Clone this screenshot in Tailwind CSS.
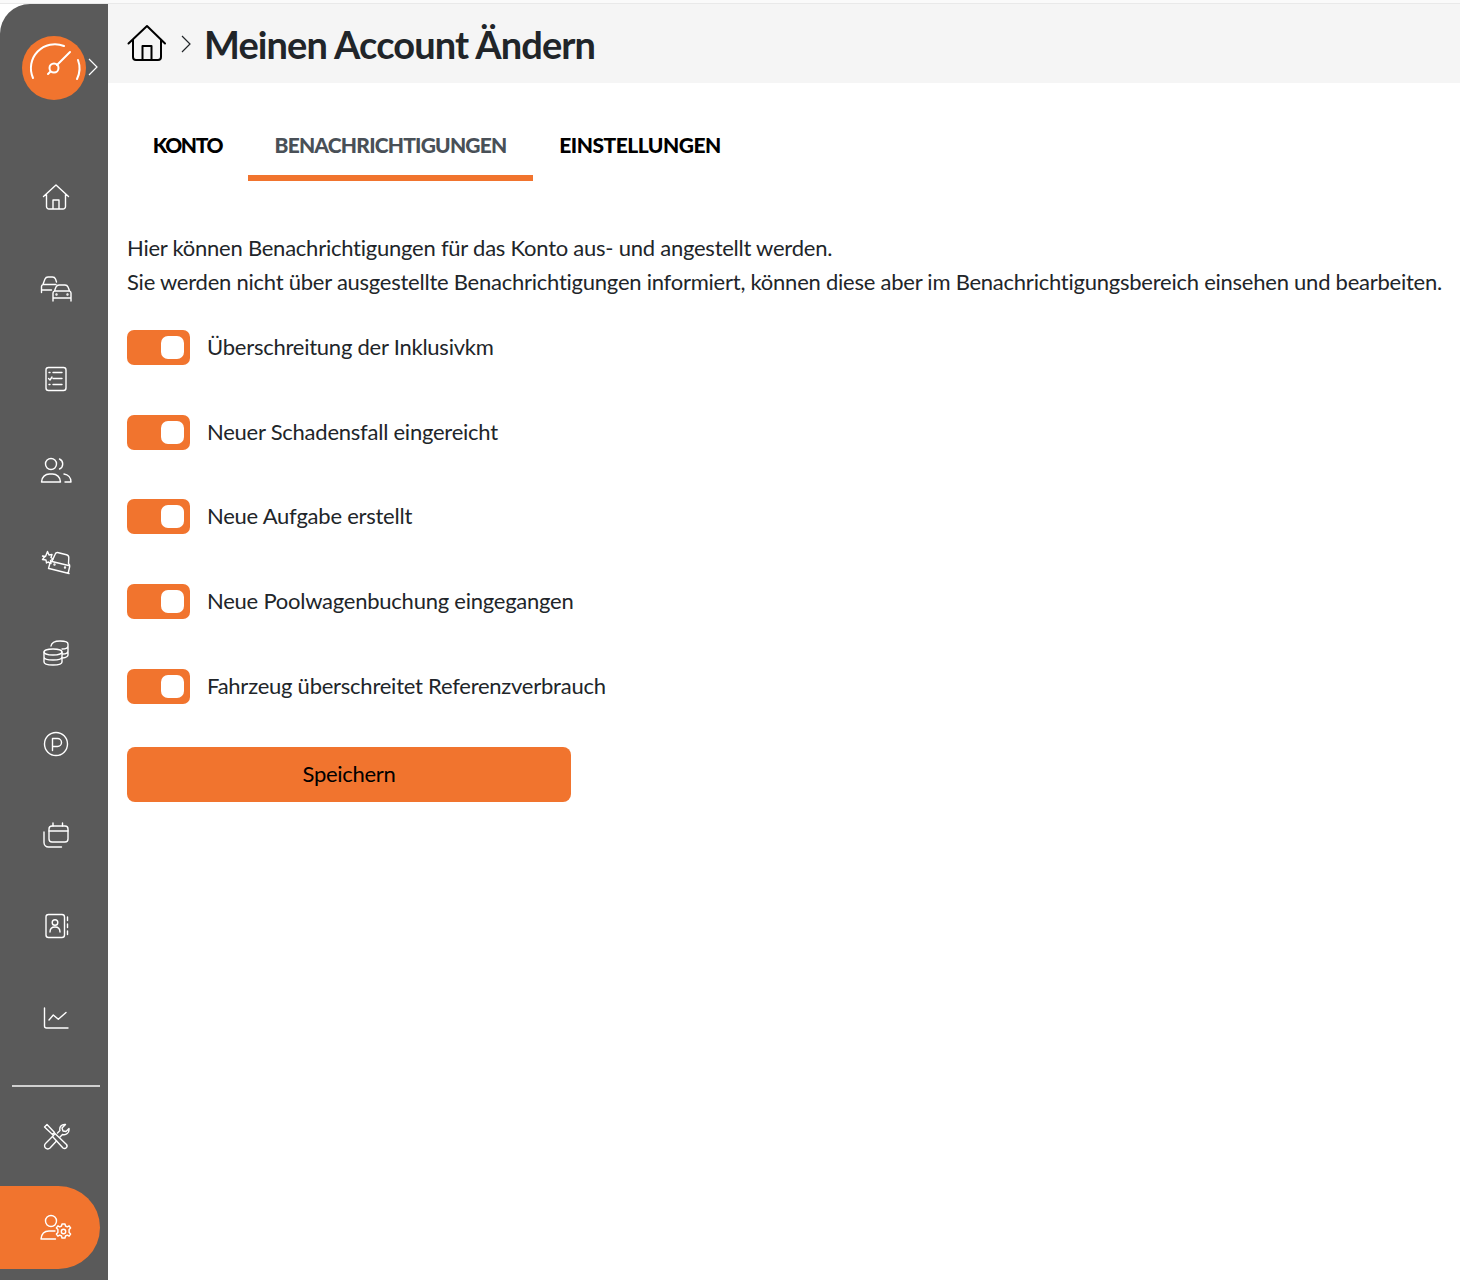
<!DOCTYPE html>
<html lang="de">
<head>
    <meta charset="UTF-8">
    <meta name="viewport" content="width=device-width, initial-scale=1.0">
    <title>Meinen Account Ändern</title>
    <script src="https://cdn.jsdelivr.net/npm/@tailwindcss/browser@4"></script>
</head>
<body class="bg-white min-h-screen font-['Lato',sans-serif] text-[#212529]">
    <div class="h-[1280px] overflow-hidden flex flex-col">
        <div class="h-1 shrink-0 border-b border-[#e9e9e9] bg-[#fafafa]"></div>
        <div class="flex flex-1 min-h-0">
            <!-- Sidebar -->
            <aside class="w-[108px] shrink-0 bg-[#5a5a5a] rounded-tl-[30px] flex flex-col text-white">
                <div class="h-[148px] shrink-0 pt-8 pl-[22px] flex items-start">
                    <div class="w-16 h-16 rounded-full bg-[#f1742e] flex items-center justify-center">
                        <svg class="w-16 h-16" viewBox="0 0 64 64" fill="none" stroke="white" stroke-linecap="round">
                            <path d="M11 42A24 24 0 0 1 42 10" stroke-width="2"/>
                            <path d="M56 24A24 24 0 0 1 55 43" stroke-width="2"/>
                            <circle cx="32" cy="32" r="4.5" stroke-width="2"/>
                            <path d="M35 29 L48 16 M28.500 35.500 L26 38" stroke-width="2"/>
                        </svg>
                    </div>
                    <svg class="w-3 h-5 mt-[21px] ml-[1px]" viewBox="0 0 12 20" fill="none" stroke="white" stroke-width="1.200"><path d="M2 2l8 8-8 8"/></svg>
                </div>
                <nav class="flex flex-col">
                    <!-- home -->
                    <a class="h-[91px] pl-1 flex items-center justify-center">
                        <svg class="w-7 h-7" viewBox="0 1 28 28" fill="none" stroke="white" stroke-width="1.400" stroke-linejoin="round" stroke-linecap="round"><path d="M1.500 13.500L14 2l12.500 11.500M4.500 11.500V23.500a2.500 2.500 0 0 0 2.500 2.500h14a2.500 2.500 0 0 0 2.500-2.500V11.500M11 26V17h6v9"/></svg>
                    </a>
                    <!-- fleet -->
                    <a class="h-[91px] pl-1 flex items-center justify-center">
                        <svg class="w-8 h-7" viewBox="0 0 32 28" fill="none" stroke="white" stroke-width="1.400" stroke-linejoin="round" stroke-linecap="round"><path d="M1.500 17.500v-6c0-1 .7-1.800 1.500-2.200L5 4c.5-1.200 1.500-2 3-2h4.500c1.500 0 2.500.8 3 2l1 3M3 9.500h13M1.500 15h10"/><path d="M13 26v-8c0-1 .6-1.800 1.500-2.200L16 12c.5-1.200 1.500-2 3-2h6c1.500 0 2.500.8 3 2l1.500 3.800c.9.400 1.500 1.200 1.500 2.200v8M14.500 16h15M13 23h18"/><circle cx="16.500" cy="19.500" r=".5"/><circle cx="27.500" cy="19.500" r=".5"/></svg>
                    </a>
                    <!-- tasks -->
                    <a class="h-[91px] pl-1 flex items-center justify-center">
                        <svg class="w-7 h-7" viewBox="0 1 28 28" fill="none" stroke="white" stroke-width="1.400" stroke-linejoin="round" stroke-linecap="round"><rect x="4" y="2.500" width="20" height="23" rx="2.500"/><path d="M11 7.500h9M11 13.500h9M11 19.500h9M7 7.500h1M7 19.500h1M6.500 13.500l1.500 1.500 2-3"/></svg>
                    </a>
                    <!-- drivers -->
                    <a class="h-[91px] pl-1 flex items-center justify-center">
                        <svg class="w-8 h-7" viewBox="0 1 32 28" fill="none" stroke="white" stroke-width="1.400" stroke-linejoin="round" stroke-linecap="round"><circle cx="11" cy="8" r="5.500"/><path d="M1.500 26c0-5 4-8 8-8h3c4 0 8 3 8 8zM19.500 3a5.500 5.500 0 0 1 0 10M24 18c4 .5 7 3.500 7 8h-6"/></svg>
                    </a>
                    <!-- damages -->
                    <a class="h-[91px] pl-1 flex items-center justify-center">
                        <svg class="w-8 h-7" viewBox="0 0 32 28" fill="none" stroke="white" stroke-width="1.400" stroke-linejoin="round" stroke-linecap="round"><path d="M7.500 3.500l1.500 3.500 3-.500-1 3 2 1.500-2.500 1.500.5 3-3-1.500-1.500 1-.5-3-3.500-.500 2-2.500L2.500 8l3 .5z"/><path d="M8.500 20.500l1.500-5.500c.3-1 1-1.600 2-1.800L15 6.500c.6-1.500 2-2.200 3.500-1.800l8 2c1.500.4 2.300 1.500 2.300 3l-.3 5.800c.9.800 1.500 1.800 1.200 3l-1.500 6.500M9 20.500l20 5M12 13.500l16.500 4"/><circle cx="14.500" cy="16.500" r=".5"/><circle cx="25" cy="19.500" r=".5"/></svg>
                    </a>
                    <!-- costs -->
                    <a class="h-[91px] pl-1 flex items-center justify-center">
                        <svg class="w-8 h-7" viewBox="0 0 32 28" fill="none" stroke="white" stroke-width="1.400" stroke-linejoin="round" stroke-linecap="round"><ellipse cx="13" cy="13" rx="9" ry="3"/><path d="M4 13v10c0 1.800 4 3 9 3s9-1.200 9-3V13M4 18c0 1.800 4 3 9 3s9-1.200 9-3M11 7C11.500 4 15 2 20 2c4.500 0 8 1.200 8 3v11c0 1.200-2 2.500-5.500 3M22 10c3.500 0 6-1 6-3M22.500 15c3 0 5.500-1 5.500-3"/></svg>
                    </a>
                    <!-- parking -->
                    <a class="h-[91px] pl-1 flex items-center justify-center">
                        <svg class="w-7 h-7" viewBox="0 0 28 28" fill="none" stroke="white" stroke-width="1.400" stroke-linejoin="round" stroke-linecap="round"><circle cx="14" cy="14" r="11.500"/><path d="M10.500 20.500V8.500h5a4 4 0 0 1 0 8h-5"/></svg>
                    </a>
                    <!-- calendar -->
                    <a class="h-[91px] pl-1 flex items-center justify-center">
                        <svg class="w-7 h-7" viewBox="0 0 28 28" fill="none" stroke="white" stroke-width="1.400" stroke-linejoin="round" stroke-linecap="round"><rect x="7" y="5" width="19" height="16" rx="3"/><path d="M7 10h19M11 2v3M20.500 2v3M2 11v10.500A4.500 4.500 0 0 0 6.500 26H19.500"/></svg>
                    </a>
                    <!-- contacts -->
                    <a class="h-[91px] pl-1 flex items-center justify-center">
                        <svg class="w-7 h-7" viewBox="0 0 28 28" fill="none" stroke="white" stroke-width="1.400" stroke-linejoin="round" stroke-linecap="round"><rect x="4" y="2.500" width="18.500" height="23" rx="2.500"/><circle cx="13" cy="10.500" r="2.800"/><path d="M8 20c0-3.500 2-5 5-5s5 1.500 5 5M25.500 5v3.500M25.500 12v3.500M25.500 19v3.500"/></svg>
                    </a>
                    <!-- stats -->
                    <a class="h-[91px] pl-1 flex items-center justify-center">
                        <svg class="w-7 h-7" viewBox="0 -1 28 28" fill="none" stroke="white" stroke-width="1.400" stroke-linejoin="round" stroke-linecap="round"><path d="M2.500 4v18a2 2 0 0 0 2 2H26M7 16l4.300-5 5 4.300L24 8.500"/></svg>
                    </a>
                </nav>
                <div class="mt-[23px] ml-3 w-[88px] h-[2px] shrink-0 bg-[#d0d0d0]"></div>
                <a class="h-[99px] pl-1 shrink-0 flex items-center justify-center">
                    <svg class="w-7 h-7" viewBox="0 1 28 28" fill="none" stroke="white" stroke-width="1.400" stroke-linejoin="round" stroke-linecap="round"><path d="M2.500 5L5 2.500l7.500 8-2 2z"/><path d="M13 11.500l11.500 11a2.500 2.500 0 0 1-3.500 3.500L10.500 14.500z"/><path d="M10 15l-6.500 6.500a3 3 0 0 0 4.500 4.500l6.500-7M15.500 11l2.500-2.500c-1-3.500 1.500-6.500 5.500-6l-3.500 3.500 1 3 3 .5 3-3c.5 4.500-3 7-6.500 6l-2.500 2.500"/></svg>
                </a>
                <div class="h-[83px] w-[100px] shrink-0 bg-[#f1742e] rounded-r-[42px] flex items-center justify-end pr-[28px]">
                    <svg class="w-8 h-7" viewBox="0 0 32 28" fill="none" stroke="white" stroke-width="1.400" stroke-linejoin="round" stroke-linecap="round"><circle cx="11" cy="7" r="5.500"/><path d="M15 17H9c-4.500 0-7.500 3-8 8h14.500"/><circle cx="23.500" cy="17.500" r="2.200"/><path d="M22 10h3l.5 2 1.800.8 1.800-1 1.500 2.200-1.500 1.500v3l1.500 1.500-1.500 2.200-1.800-1-1.800.8-.5 2h-3l-.5-2-1.800-.8-1.800 1-1.500-2.200 1.500-1.500v-3l-1.500-1.500 1.500-2.200 1.800 1 1.800-.8z"/></svg>
                </div>
            </aside>

            <main class="flex-1 min-w-0">
                <!-- Header -->
                <header class="h-[79px] bg-[#f5f5f5] flex items-center pl-[19px]">
                    <svg class="w-10 h-10 text-black" viewBox="0 0 40 40" fill="none" stroke="currentColor" stroke-width="2" stroke-linejoin="round" stroke-linecap="round"><path d="M1.500 19.500L20 2l18 17.500M6 15.500V33a3 3 0 0 0 3 3h22a3 3 0 0 0 3-3V15.500M15.500 36V22h9v14"/></svg>
                    <svg class="w-3 h-5 ml-[13px]" viewBox="0 0 12 20" fill="none" stroke="#212529" stroke-width="1.200"><path d="M2 2l8 8-8 8"/></svg>
                    <h1 class="ml-[12px] text-[38px] font-bold leading-none tracking-[-0.9px] text-[#212529]">Meinen Account Ändern</h1>
                </header>

                <!-- Tabs -->
                <div class="flex ml-[19px] mt-[34px] h-[64px]">
                    <button class="w-[121px] h-[64px] text-[21px] font-black tracking-[-1.400px] text-black leading-none pb-[10px]">KONTO</button>
                    <button class="w-[285px] h-[64px] text-[21px] font-black tracking-[-0.800px] text-[#495057] leading-none pb-[4px] border-b-[6px] border-[#f1742e]">BENACHRICHTIGUNGEN</button>
                    <button class="w-[214px] h-[64px] text-[21px] font-black tracking-[-0.500px] text-black leading-none pb-[10px]">EINSTELLUNGEN</button>
                </div>

                <div class="pl-[19px] pt-[50px]">
                    <p class="text-[22px] leading-[34px] tracking-[-0.24px] whitespace-nowrap">Hier können Benachrichtigungen für das Konto aus- und angestellt werden.<br>Sie werden nicht über ausgestellte Benachrichtigungen informiert, können diese aber im Benachrichtigungsbereich einsehen und bearbeiten.</p>

                    <div class="mt-[31px] flex flex-col gap-[49.700px]">
                        <label class="flex items-center h-[35px] gap-[17px]">
                            <span class="w-[63px] h-[35px] rounded-[7px] bg-[#f1742e] flex items-center justify-end pr-[6px]"><span class="w-[23px] h-[23px] rounded-[7px] bg-white"></span></span>
                            <span class="text-[22px] tracking-[-0.24px] pb-[2px]">Überschreitung der Inklusivkm</span>
                        </label>
                        <label class="flex items-center h-[35px] gap-[17px]">
                            <span class="w-[63px] h-[35px] rounded-[7px] bg-[#f1742e] flex items-center justify-end pr-[6px]"><span class="w-[23px] h-[23px] rounded-[7px] bg-white"></span></span>
                            <span class="text-[22px] tracking-[-0.24px] pb-[2px]">Neuer Schadensfall eingereicht</span>
                        </label>
                        <label class="flex items-center h-[35px] gap-[17px]">
                            <span class="w-[63px] h-[35px] rounded-[7px] bg-[#f1742e] flex items-center justify-end pr-[6px]"><span class="w-[23px] h-[23px] rounded-[7px] bg-white"></span></span>
                            <span class="text-[22px] tracking-[-0.24px] pb-[2px]">Neue Aufgabe erstellt</span>
                        </label>
                        <label class="flex items-center h-[35px] gap-[17px]">
                            <span class="w-[63px] h-[35px] rounded-[7px] bg-[#f1742e] flex items-center justify-end pr-[6px]"><span class="w-[23px] h-[23px] rounded-[7px] bg-white"></span></span>
                            <span class="text-[22px] tracking-[-0.24px] pb-[2px]">Neue Poolwagenbuchung eingegangen</span>
                        </label>
                        <label class="flex items-center h-[35px] gap-[17px]">
                            <span class="w-[63px] h-[35px] rounded-[7px] bg-[#f1742e] flex items-center justify-end pr-[6px]"><span class="w-[23px] h-[23px] rounded-[7px] bg-white"></span></span>
                            <span class="text-[22px] tracking-[-0.24px] pb-[2px]">Fahrzeug überschreitet Referenzverbrauch</span>
                        </label>
                    </div>

                    <button class="mt-[43px] w-[444px] h-[55px] pb-[2px] rounded-[8px] bg-[#f1742e] text-[22px] tracking-[-0.3px] text-black">Speichern</button>
                </div>
            </main>
        </div>
    </div>
</body>
</html>
